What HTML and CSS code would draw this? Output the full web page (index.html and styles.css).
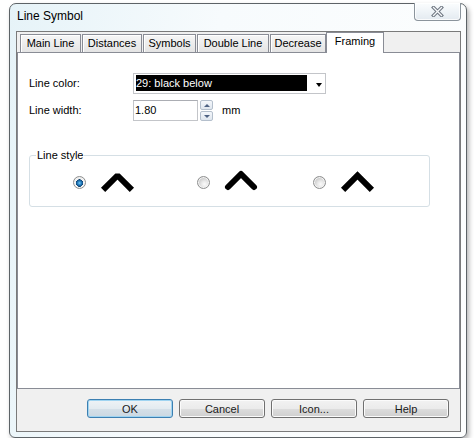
FILE: index.html
```html
<!DOCTYPE html>
<html>
<head>
    <title>Line Symbol</title>
    <link rel="stylesheet" href="styles.css">
</head>
<body>
    <div class="window">
        <div class="titlebar">
            <span class="title">Line Symbol</span>
            <div class="close-btn">
                <svg width="13" height="11" viewBox="0 0 13 11">
                    <path d="M2.5 1.5 L10.5 9.5 M10.5 1.5 L2.5 9.5" stroke="#6f7782" stroke-width="3.4" stroke-linecap="square" fill="none"/>
                    <path d="M2.5 1.5 L10.5 9.5 M10.5 1.5 L2.5 9.5" stroke="#f7f9fb" stroke-width="1.3" stroke-linecap="square" fill="none"/>
                </svg>
            </div>
        </div>

        <div class="client">
            <div class="tabs">
                <div class="tab tab-main">Main Line</div>
                <div class="tab tab-dist">Distances</div>
                <div class="tab tab-sym">Symbols</div>
                <div class="tab tab-double">Double Line</div>
                <div class="tab tab-dec">Decrease</div>
                <div class="tab tab-frame active">Framing</div>
            </div>

            <div class="tab-panel">
                <div class="form-row row-color">
                    <label class="field-label">Line color:</label>
                    <div class="combo">
                        <span class="combo-value">29: black below</span>
                        <span class="combo-arrow"></span>
                    </div>
                </div>
                <div class="form-row row-width">
                    <label class="field-label">Line width:</label>
                    <div class="spin-edit">1.80</div>
                    <div class="spinner">
                        <span class="spin-btn spin-up"></span>
                        <span class="spin-btn spin-down"></span>
                    </div>
                    <span class="unit">mm</span>
                </div>

                <fieldset class="group">
                    <legend>Line style</legend>
                    <div class="style-options">
                        <div class="style-option">
                            <span class="radio checked"></span>
                            <svg class="join" width="36" height="24" viewBox="0 0 36 24">
                                <polyline points="2.1,19.9 16.5,5.5 30.9,19.9" stroke="#000" stroke-width="6" fill="none" stroke-linejoin="bevel" stroke-linecap="butt"/>
                            </svg>
                        </div>
                        <div class="style-option">
                            <span class="radio"></span>
                            <svg class="join" width="36" height="24" viewBox="0 0 36 24">
                                <polyline points="3,17 16,4 29,17" stroke="#000" stroke-width="6" fill="none" stroke-linejoin="round" stroke-linecap="round"/>
                            </svg>
                        </div>
                        <div class="style-option">
                            <span class="radio"></span>
                            <svg class="join" width="36" height="24" viewBox="0 0 36 24">
                                <polyline points="2.1,19.9 16.5,5.5 30.9,19.9" stroke="#000" stroke-width="6" fill="none" stroke-linejoin="miter" stroke-linecap="butt"/>
                            </svg>
                        </div>
                    </div>
                </fieldset>
            </div>

            <div class="button-row">
                <button class="btn default">OK</button>
                <button class="btn">Cancel</button>
                <button class="btn">Icon...</button>
                <button class="btn">Help</button>
            </div>
        </div>
    </div>
</body>
</html>
```

FILE: styles.css
```css
body {
    margin: 0;
    background: #fff;
    font-family: "Liberation Sans", Arial, sans-serif;
    font-size: 11px;
    color: #000;
}

/* dialog frame */
.window {
    margin: 3px 0 0 9px;
    width: 458px;
    height: 435px;
    box-sizing: border-box;
    border: 1px solid #5d6367;
    border-radius: 7px 7px 6px 6px;
    background: linear-gradient(100deg, #e6f3f8 0%, #f7fbfd 40%, #fdfefe 100%);
    box-shadow: 2px 3px 5px rgba(0, 0, 0, 0.3);
    display: flex;
    flex-direction: column;
}
.titlebar {
    height: 27px;
    flex: none;
    display: flex;
    justify-content: space-between;
    align-items: flex-start;
    padding-left: 7px;
}
.title {
    font-size: 12px;
    line-height: 24px;
    color: #000;
}
.close-btn {
    width: 47px;
    height: 18px;
    box-sizing: border-box;
    margin: -1px 5px 0 0;
    border: 1px solid #8b949c;
    border-top: none;
    border-radius: 0 0 4px 4px;
    background: linear-gradient(#fbfdfe, #eef3f7 55%, #e3eaf0);
    box-shadow: inset 0 0 0 1px rgba(255, 255, 255, 0.8);
    display: flex;
    align-items: center;
    justify-content: center;
}

.client {
    flex: 1;
    margin: 0 5px 5px 6px;
    border: 1px solid #7a7a7a;
    background: #f0f0f0;
    display: flex;
    flex-direction: column;
}

/* tab strip */
.tabs {
    height: 20px;
    flex: none;
    display: flex;
    align-items: flex-end;
    padding-left: 3px;
}
.tab {
    height: 18px;
    box-sizing: border-box;
    border: 1px solid #898c95;
    border-bottom: none;
    margin-right: 1px;
    background: linear-gradient(#f6f6f6, #e4e4e4);
    box-shadow: inset 1px 1px 0 #fff;
    line-height: 17px;
    text-align: center;
    white-space: nowrap;
}
.tab-main { width: 61px; }
.tab-dist { width: 60px; }
.tab-sym { width: 53px; }
.tab-double { width: 72px; }
.tab-dec { width: 56px; margin-right: 0; }
.tab.active {
    position: relative;
    z-index: 1;
    width: 58px;
    height: 21px;
    margin-bottom: -1px;
    background: #fff;
    box-shadow: none;
    line-height: 17px;
    padding-bottom: 3px;
}

.tab-panel {
    height: 337px;
    flex: none;
    box-sizing: border-box;
    border: 1px solid #898c95;
    background: #fff;
    padding: 20px 0 0 11px;
}

/* fields */
.form-row {
    display: flex;
    align-items: flex-start;
}
.row-width {
    margin-top: 6px;
}
.field-label {
    width: 104px;
    flex: none;
    line-height: 21px;
}
.unit {
    line-height: 21px;
    margin-left: 9px;
}

.combo {
    width: 193px;
    height: 21px;
    box-sizing: border-box;
    border: 1px solid #c3c5c9;
    background: #fff;
    display: flex;
    align-items: flex-start;
    padding: 1px 0 0 2px;
}
.combo-value {
    width: 171px;
    height: 16px;
    line-height: 16px;
    background: #000;
    color: #fff;
    white-space: nowrap;
}
.combo-arrow {
    margin: 8px 0 0 9px;
    width: 0;
    height: 0;
    border-top: 4px solid #000;
    border-left: 3.5px solid transparent;
    border-right: 3.5px solid transparent;
}

.spin-edit {
    width: 65px;
    height: 21px;
    box-sizing: border-box;
    border: 1px solid #c3c5c9;
    border-top-color: #abadb3;
    padding: 0 1px;
    line-height: 19px;
}
.spinner {
    margin-left: 2px;
    width: 13px;
    height: 21px;
    display: flex;
    flex-direction: column;
    justify-content: space-between;
}
.spin-btn {
    height: 10px;
    box-sizing: border-box;
    border: 1px solid #b4bfcc;
    border-radius: 2px;
    background: linear-gradient(#f4f7fb, #dfe6ee);
    display: flex;
    align-items: center;
    justify-content: center;
}
.spin-up::after {
    content: "";
    border-bottom: 3px solid #4e6283;
    border-left: 3px solid transparent;
    border-right: 3px solid transparent;
}
.spin-down::after {
    content: "";
    border-top: 3px solid #4e6283;
    border-left: 3px solid transparent;
    border-right: 3px solid transparent;
}

/* group box */
.group {
    width: 401px;
    box-sizing: border-box;
    margin: 28px 0 0 0;
    padding: 8px 0 12px 0;
    border: 1px solid #d5dfe5;
    border-radius: 3px;
}
.group legend {
    margin-left: 6px;
    padding: 0 1px;
    line-height: 13px;
}
.style-options {
    display: grid;
    grid-template-columns: 124px 116px auto;
    height: 24px;
    padding-left: 43px;
}
.style-option {
    display: flex;
    align-items: center;
    gap: 15px;
}
.join {
    overflow: visible;
}

.radio {
    width: 13px;
    height: 13px;
    box-sizing: border-box;
    border-radius: 50%;
    border: 1px solid #8e8f8f;
    background: radial-gradient(circle at 60% 65%, #fbfbfb 0, #e9e9e9 3px, #cfcfcf 6px);
    box-shadow: inset 0 0 0 1px #f4f4f4;
}
.radio.checked {
    background: radial-gradient(circle at 50% 55%, #7fd0f5 0, #2f8ccd 1.5px, #155a94 3px, #0e3d66 3.6px, #f6f6f6 3.8px, #e4e4e4 5.5px);
}

/* dialog buttons */
.button-row {
    flex: 1;
    display: flex;
    justify-content: flex-end;
    align-items: flex-start;
    gap: 6px;
    padding: 10px 11px 0 0;
}
.btn {
    width: 86px;
    height: 19px;
    box-sizing: border-box;
    padding: 0;
    border: 1px solid #707070;
    border-radius: 3px;
    background: linear-gradient(#f2f2f2 0%, #ebebeb 50%, #dddddd 51%, #cfcfcf 100%);
    box-shadow: inset 0 0 0 1px #fbfbfb;
    font-family: "Liberation Sans", Arial, sans-serif;
    font-size: 11px;
    color: #1a1a1a;
    line-height: 16px;
}
.btn.default {
    border-color: #3c7fb1;
    background: linear-gradient(#eef3f6 0%, #e3ebf0 50%, #d5e0e8 51%, #cbd8e2 100%);
    box-shadow: inset 0 0 0 1px #9fd4f1;
}
```
